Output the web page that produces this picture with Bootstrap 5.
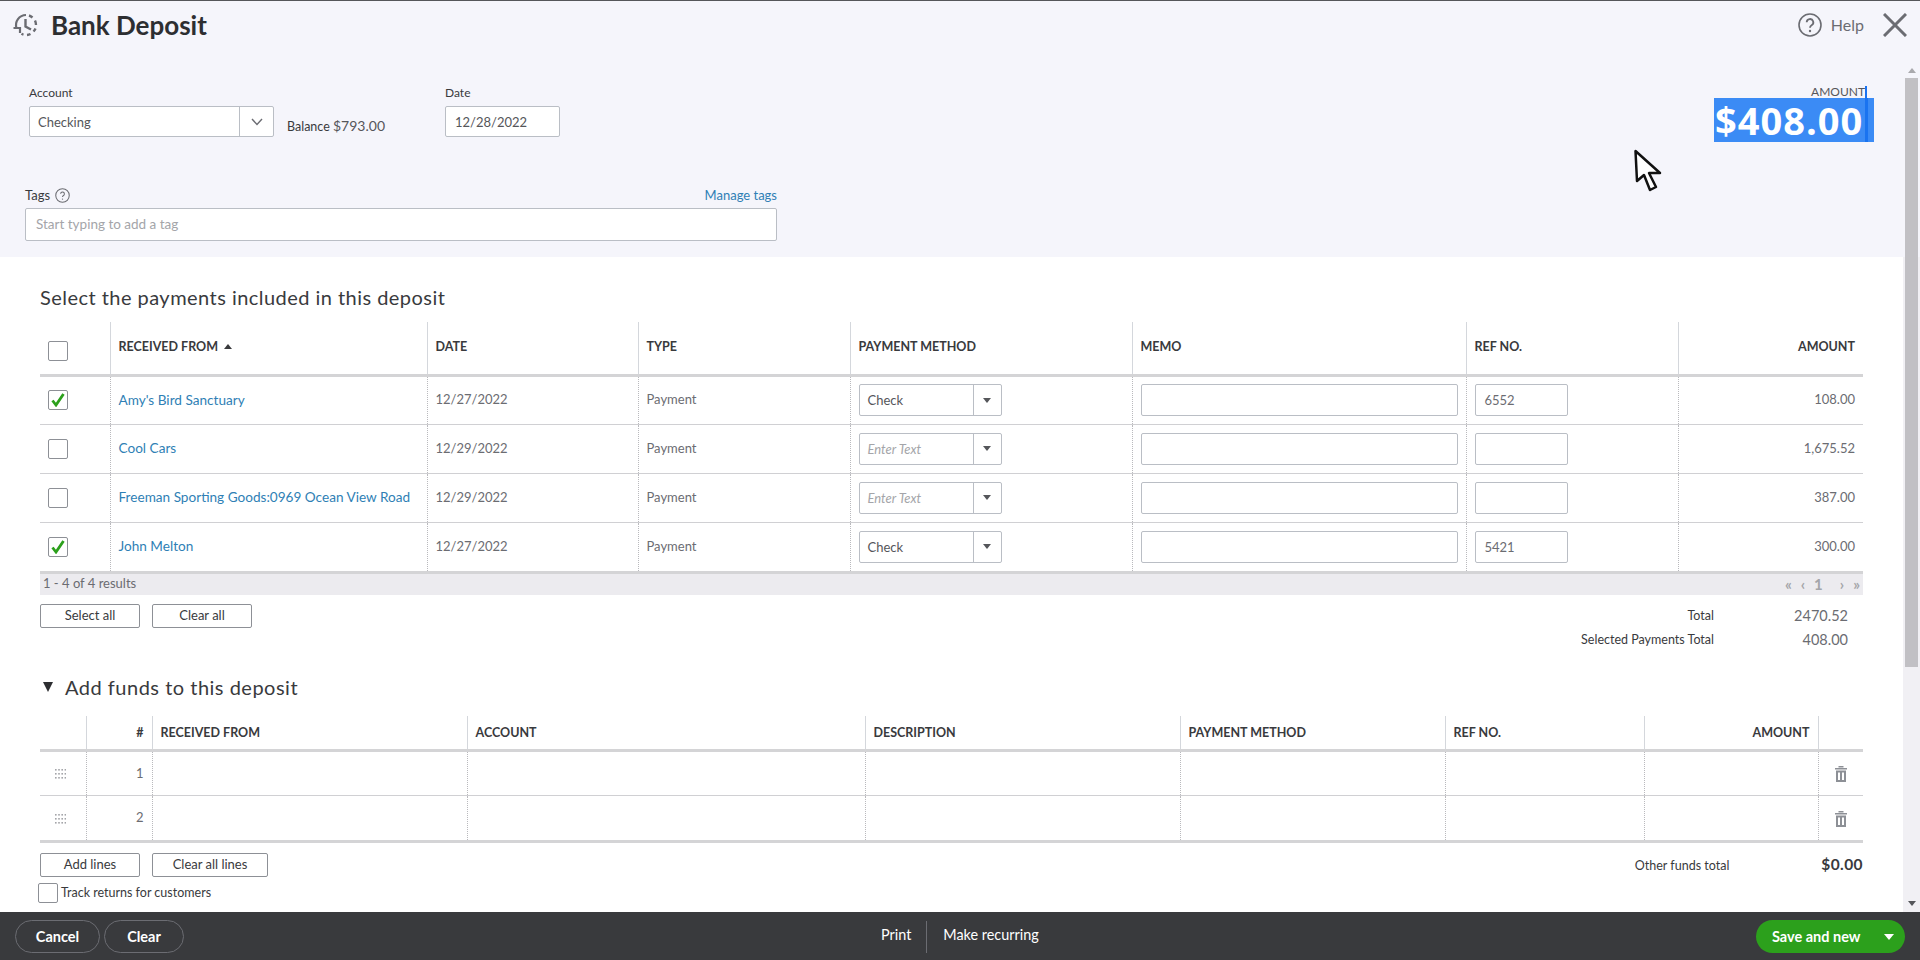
<!DOCTYPE html>
<html lang="en">
<head>
  <meta charset="UTF-8">
  <title>Bank Deposit</title>
  <link rel="stylesheet" href="https://cdn.jsdelivr.net/npm/bootstrap@5.3.0/dist/css/bootstrap.min.css">
  <style>
    html, body { height: 100%; overflow: hidden; }
    body {
      font-family: Lato, "Liberation Sans", sans-serif;
      font-size: 13px;
      color: #393a3d;
      background: #fff;
      display: flex;
      flex-direction: column;
      border-top: 1px solid #55565a;
    }
    a { text-decoration: none; color: #2f7fb5; }

    /* top bar */
    .top-bar { height: 59px; background: #f5f5fb; padding: 12px 13px 0 13px; flex: none; }
    .page-title { font-size: 26px; font-weight: 700; margin: -3px 0 0 12px; color: #2d2e31; line-height: 30px; }
    .help-text { font-size: 16px; color: #6b6c72; margin: 0 19px 0 9px; }

    /* scroll area */
    .scroll-row { flex: 1; min-height: 0; display: flex; }
    .scroll-body { flex: 1; min-width: 0; overflow: hidden; }
    .scroll-track { width: 17px; background: #f1f0f4; display: flex; flex-direction: column; align-items: center; flex: none; }
    .track-head { background: #f5f5fb; height: 197px; margin-bottom: -197px; width: 100%; }
    .sb-up { width: 0; height: 0; border: 4px solid transparent; border-top: 0; border-bottom: 5px solid #a9a9ad; margin-top: 8px; position: relative; }
    .sb-thumb { width: 13px; height: 589px; background: #c1c0c4; margin-top: 5px; position: relative; }
    .sb-down { width: 0; height: 0; border: 4px solid transparent; border-bottom: 0; border-top: 5px solid #55565a; margin-top: auto; margin-bottom: 6px; }

    /* header form */
    .form-panel { background: #f5f5fb; height: 197px; padding: 26px 0 0 25px; }
    .top-fields { height: 51px; }
    .form-label-sm { font-size: 12px; line-height: 14px; margin-bottom: 6px; color: #393a3d; }
    .account-col { margin-left: 4px; width: 245px; }
    .fake-select { height: 31px; background: #fff; border: 1px solid #babec5; border-radius: 2px; display: flex; align-items: stretch; }
    .fake-select .val { flex: 1; padding: 0 8px; font-size: 13px; line-height: 30px; color: #55565a; }
    .fake-select .arr { width: 34px; border-left: 1px solid #babec5; display: flex; align-items: center; justify-content: center; }
    .balance { margin: 29px 0 0 13px; width: 158px; font-size: 12.5px; }
    .balance span { font-size: 14px; color: #55565a; }
    .date-box { width: 115px; height: 31px; background: #fff; border: 1px solid #babec5; border-radius: 2px; padding: 0 9px; line-height: 30px; color: #55565a; }
    .amount-box { margin-left: auto; margin-right: 29px; width: 160px; text-align: right; }
    .amount-label { font-size: 12px; line-height: 12px; color: #55565a; padding-right: 9px; }
    .amount-label i { display: inline-block; width: 2px; height: 12px; background: #1a73f0; vertical-align: top; margin-right: -2px; }
    .amount-value { display: block; height: 44px; background: linear-gradient(to right, #3b8bf5 0, #3b8bf5 151px, #1a73f0 151px, #1a73f0 154px, #3b8bf5 154px); color: #fff; font-size: 38px; font-weight: 700; line-height: 44px; text-align: left; padding-left: 1px; font-family: "Open Sans", sans-serif; letter-spacing: 1px; white-space: nowrap; }
    .tags-block { width: 752px; margin-top: 49px; }
    .tags-head { height: 22px; font-size: 13px; }
    .tags-head a { font-size: 13px; line-height: 18px; }
    .tag-input { height: 33px; background: #fff; border: 1px solid #babec5; border-radius: 2px; padding: 0 10px; line-height: 31px; color: #a4a5a9; font-size: 13.5px; }
    .qmark { width: 15px; height: 15px; margin-left: 5px; }

    /* tables */
    .section-title { font-size: 20px; letter-spacing: .46px; color: #393a3d; margin: 0 0 13px; line-height: 24px; font-weight: 400; }
    .pay-section { padding: 28px 40px 0 40px; }
    .dep-table { width: 1823px; table-layout: fixed; margin: 0; border-collapse: collapse; font-size: 13px; color: #6b6c72; }
    .dep-table th { height: 53px; font-size: 12.5px; font-weight: 700; color: #393a3d; padding: 0 8px 1px; border-left: 1px solid #d4d7dc; border-bottom: 3px solid #d4d4d6; vertical-align: middle; white-space: nowrap; }
    .dep-table td { height: 49px; padding: 0 8px; border-left: 1px dotted #b9b9bd; border-bottom: 1px solid #d0d0d3; vertical-align: middle; white-space: nowrap; }
    .dep-table td a { font-size: 13.6px; }
    .dep-table th:first-child, .dep-table td:first-child { border-left: 0; }
    .dep-table tbody tr:last-child td { border-bottom: 3px solid #d4d4d6; height: 50px; }
    .w-check { width: 70px; } .w-from { width: 317px; } .w-date { width: 211px; } .w-type { width: 212px; }
    .w-method { width: 282px; } .w-memo { width: 334px; } .w-ref { width: 212px; } .w-amt { width: 185px; }
    .sort-up { display: inline-block; border: 4px solid transparent; border-top: 0; border-bottom: 5px solid #393a3d; margin-left: 3px; vertical-align: 2px; }
    .box { width: 20px; height: 20px; border: 1px solid #8d9096; border-radius: 2px; background: #fff; display: flex; align-items: center; justify-content: center; }
    .box-head { margin-top: 8px; }
    .cell-select { width: 143px; height: 32px; border: 1px solid #babec5; border-radius: 2px; display: flex; background: #fff; }
    .cell-select .val { flex: 1; padding: 0 8px; line-height: 30px; color: #55565a; font-size: 13px; }
    .cell-select .val.empty { font-style: italic; color: #a4a5a9; font-size: 13px; }
    .cell-select .arr { width: 28px; border-left: 1px solid #babec5; display: flex; align-items: center; justify-content: center; }
    .caret-dn { width: 0; height: 0; border: 4px solid transparent; border-bottom: 0; border-top: 5px solid #55565a; }
    .cell-input { height: 32px; border: 1px solid #babec5; border-radius: 2px; background: #fff; padding: 0 9px; line-height: 30px; color: #6b6c72; }
    .memo-input { width: 317px; }
    .ref-input { width: 93px; }
    .pager-bar { height: 21px; background: #ecebef; display: flex; justify-content: space-between; align-items: center; padding: 0 3px; font-size: 13px; color: #6b6c72; }
    .pager-nav { color: #a4a5a9; font-weight: 700; font-size: 15px; line-height: 18px; display: flex; gap: 9px; }
    .plain-btn { height: 24px; border: 1px solid #8d9096; border-radius: 2px; background: #fff; font-size: 13px; color: #393a3d; display: inline-flex; align-items: center; justify-content: center; padding: 0; }
    .btn-sel { width: 100px; }
    .btn-add { width: 100px; }
    .btn-clearlines { width: 116px; margin-left: 12px; }
    .btn-row { margin-top: 9px; gap: 12px; }
    .totals { font-size: 12.5px; text-align: right; }
    .totals-grid { display: grid; grid-template-columns: auto 134px; row-gap: 6px; padding-right: 15px; margin-top: 12px; }
    .totals-grid b { font-weight: 400; color: #393a3d; line-height: 18px; }
    .totals-grid span { color: #6b6c72; font-size: 14.500px; line-height: 18px; }
    .funds-section { padding: 0 40px; margin-top: 25px; }
    .tri-down { width: 0; height: 0; border: 5.5px solid transparent; border-bottom: 0; border-top: 10px solid #2d2e31; margin: 0 12px 0 3px; }
    .funds-title { font-size: 20px; color: #393a3d; margin: 0; line-height: 26px; font-weight: 400; letter-spacing: .5px; }
    .funds-table { margin-top: 16px; }
    .funds-table th { height: 35px; padding-top: 2px; padding-bottom: 0; }
    .funds-table td { height: 45px; }
    .funds-table tbody tr:last-child td { height: 46px; }
    .f-drag { width: 46px; } .f-num { width: 66px; } .f-from { width: 315px; } .f-acct { width: 398px; } .f-desc { width: 315px; }
    .f-meth { width: 265px; } .f-ref { width: 199px; } .f-amt { width: 174px; } .f-del { width: 45px; }
    .drag-cell { padding-right: 12px !important; }
    .funds-actions { margin-top: 10px; height: 24px; }
    .other-total { font-size: 12.5px; color: #393a3d; }
    .other-total b { font-size: 15.500px; font-weight: 700; margin-left: 92px; letter-spacing: .4px; }
    .track-row { font-size: 12.5px; color: #393a3d; margin-left: -2px; margin-top: 6px; }
    .track-row .box { margin-right: 3px; }

    /* bottom bar */
    .bottom-bar { height: 48px; flex: none; background: #393a3d; color: #fff; padding: 8px 15px 7px 15px; display: flex; align-items: center; }
    .pill { height: 33px; border: 1px solid #6b6c72; border-radius: 17px; color: #fff; background: transparent; font-size: 14.500px; font-weight: 700; display: inline-flex; align-items: center; justify-content: center; padding: 0; }
    .pill-cancel { width: 85px; margin-right: 4px; }
    .pill-clear { width: 80px; }
    .left-actions { width: 866px; }
    .mid-actions { height: 32px; display: flex; align-items: center; font-size: 14.400px; }
    .mid-text { margin-top: -3px; }
    .mid-sep { width: 1px; height: 32px; background: #6b6c72; margin: 0 16px 0 15px; }
    .save-btn { width: 149px; height: 33px; margin-left: auto; background: #2ca01c; color: #fff; border: 0; border-radius: 17px; font-size: 14.500px; font-weight: 700; display: flex; align-items: center; padding: 0 11px 0 16px; justify-content: space-between; }
    .save-caret { width: 0; height: 0; border: 5px solid transparent; border-bottom: 0; border-top: 6px solid #fff; }
    .mouse-cursor { position: absolute; left: 1634px; top: 149px; width: 28px; height: 44px; }
  </style>
</head>
<body>

<div class="top-bar d-flex align-items-start">
  <svg width="26" height="24" viewBox="0 0 26 24" fill="none" stroke="#6b6c72" stroke-width="2.200">
    <path d="M3.500 15A10 10 0 0 1 13 2" />
    <path d="M16 2.500A10 10 0 0 1 19.500 4.500" stroke-width="2.400" />
    <path d="M22 7.500A10 10 0 0 1 23 12" stroke-width="2.400" />
    <path d="M22.500 15.500A10 10 0 0 1 20.500 18.500" stroke-width="2.400" />
    <path d="M17.500 21A10 10 0 0 1 14 22" stroke-width="2.400" />
    <path d="M10.500 21.700A10 10 0 0 1 8.500 20.800" stroke-width="2.400" />
    <path d="M12.500 6v7.500l5.500 3" stroke-width="2.400" />
    <path d="M0.500 15h6.500v5" stroke-width="2.200" />
  </svg>
  <h1 class="page-title flex-grow-1">Bank Deposit</h1>
  <div class="d-flex align-items-center">
    <svg width="24" height="24" viewBox="0 0 24 24" fill="none" stroke="#6b6c72" stroke-width="1.600">
      <circle cx="12" cy="12" r="11" />
      <path d="M8.700 9.300A3.300 3.300 0 1 1 13.600 12.200C12.500 12.900 12 13.400 12 14.800" stroke-width="1.800" />
      <circle cx="12" cy="18" r="1.200" fill="#6b6c72" stroke="none" />
    </svg>
    <span class="help-text">Help</span>
    <svg width="24" height="24" viewBox="0 0 24 24" fill="none" stroke="#6b6c72" stroke-width="3">
      <path d="M1 1l22 22M23 1L1 23" />
    </svg>
  </div>
</div>

<div class="scroll-row">
  <div class="scroll-body">
    <div class="form-panel">
      <div class="d-flex top-fields">
        <div class="account-col">
          <div class="form-label-sm">Account</div>
          <div class="fake-select">
            <div class="val">Checking</div>
            <div class="arr">
              <svg width="12" height="8" viewBox="0 0 12 8" fill="none" stroke="#6b6c72" stroke-width="1.400"><path d="M1 1l5 5.500L11 1" /></svg>
            </div>
          </div>
        </div>
        <div class="balance">Balance <span>$793.00</span></div>
        <div>
          <div class="form-label-sm">Date</div>
          <div class="date-box">12/28/2022</div>
        </div>
        <div class="amount-box">
          <div class="amount-label">AMOUNT<i></i></div>
          <div class="amount-value">$408.00</div>
        </div>
      </div>
      <div class="tags-block">
        <div class="tags-head d-flex justify-content-between align-items-start">
          <div class="d-flex align-items-center">Tags
            <svg class="qmark" viewBox="0 0 16 16" fill="none" stroke="#6b6c72" stroke-width="1.100">
              <circle cx="8" cy="8" r="7.200" />
              <path d="M6 6.200A2 2 0 1 1 9 8C8.300 8.500 8 8.800 8 9.600" />
              <circle cx="8" cy="11.800" r=".7" fill="#6b6c72" stroke="none" />
            </svg>
          </div>
          <a href="#">Manage tags</a>
        </div>
        <div class="tag-input">Start typing to add a tag</div>
      </div>
    </div>

    <div class="pay-section">
      <h2 class="section-title">Select the payments included in this deposit</h2>
      <table class="table dep-table" id="payments-table">
        <colgroup>
          <col class="w-check"><col class="w-from"><col class="w-date"><col class="w-type">
          <col class="w-method"><col class="w-memo"><col class="w-ref"><col class="w-amt">
        </colgroup>
        <thead>
          <tr>
            <th><div class="box box-head"></div></th>
            <th>RECEIVED FROM <span class="sort-up"></span></th>
            <th>DATE</th>
            <th>TYPE</th>
            <th>PAYMENT METHOD</th>
            <th>MEMO</th>
            <th>REF NO.</th>
            <th class="text-end">AMOUNT</th>
          </tr>
        </thead>
        <tbody id="payments-body"></tbody>
      </table>
      <div class="pager-bar">
        <span>1 - 4 of 4 results</span>
        <span class="pager-nav"><span>«</span><span>‹</span><span>1</span><span class="ms-2">›</span><span>»</span></span>
      </div>
      <div class="d-flex justify-content-between align-items-start">
        <div class="d-flex btn-row">
          <button class="plain-btn btn-sel">Select all</button>
          <button class="plain-btn btn-sel">Clear all</button>
        </div>
        <div class="totals-grid totals">
          <b>Total</b><span>2470.52</span>
          <b>Selected Payments Total</b><span>408.00</span>
        </div>
      </div>
    </div>

    <div class="funds-section">
      <div class="d-flex align-items-center">
        <div class="tri-down"></div>
        <h2 class="funds-title">Add funds to this deposit</h2>
      </div>
      <table class="table dep-table funds-table">
        <colgroup>
          <col class="f-drag"><col class="f-num"><col class="f-from"><col class="f-acct"><col class="f-desc">
          <col class="f-meth"><col class="f-ref"><col class="f-amt"><col class="f-del">
        </colgroup>
        <thead>
          <tr>
            <th></th>
            <th class="text-end">#</th>
            <th>RECEIVED FROM</th>
            <th>ACCOUNT</th>
            <th>DESCRIPTION</th>
            <th>PAYMENT METHOD</th>
            <th>REF NO.</th>
            <th class="text-end">AMOUNT</th>
            <th></th>
          </tr>
        </thead>
        <tbody id="funds-body"></tbody>
      </table>
      <div class="d-flex justify-content-between align-items-center funds-actions">
        <div class="d-flex">
          <button class="plain-btn btn-add">Add lines</button>
          <button class="plain-btn btn-clearlines">Clear all lines</button>
        </div>
        <div class="other-total">Other funds total<b>$0.00</b></div>
      </div>
      <div class="track-row d-flex align-items-center">
        <div class="box"></div>Track returns for customers
      </div>
    </div>
  </div>
  <div class="scroll-track">
    <div class="track-head"></div>
    <div class="sb-up"></div>
    <div class="sb-thumb"></div>
    <div class="sb-down"></div>
  </div>
</div>

<div class="bottom-bar">
  <div class="left-actions">
    <button class="pill pill-cancel">Cancel</button><button class="pill pill-clear">Clear</button>
  </div>
  <div class="mid-actions">
    <span class="mid-text">Print</span><span class="mid-sep"></span><span class="mid-text">Make recurring</span>
  </div>
  <button class="save-btn">Save and new<span class="save-caret"></span></button>
</div>

<svg class="mouse-cursor" viewBox="0 0 28 44" fill="#fff" stroke="#111" stroke-width="2.500" stroke-linejoin="round">
  <path d="M1.500 2L3 32l7-6 6 15 6-3-7-14h11z" />
</svg>

<script>
  const payments = [
    { name: "Amy's Bird Sanctuary", date: '12/27/2022', checked: true, method: 'Check', ref: '6552', amount: '108.00' },
    { name: 'Cool Cars', date: '12/29/2022', checked: false, method: '', ref: '', amount: '1,675.52' },
    { name: 'Freeman Sporting Goods:0969 Ocean View Road', date: '12/29/2022', checked: false, method: '', ref: '', amount: '387.00' },
    { name: 'John Melton', date: '12/27/2022', checked: true, method: 'Check', ref: '5421', amount: '300.00' }
  ];

  const tick = '<svg width="14" height="14" viewBox="0 0 14 14" fill="none" stroke="#2ca01c" stroke-width="2.800"><path d="M1.500 7.500l3.500 4.500L12.500 1" /></svg>';

  document.getElementById('payments-body').innerHTML = payments.map(p => `
    <tr>
      <td><div class="box">${p.checked ? tick : ''}</div></td>
      <td><a href="#">${p.name}</a></td>
      <td>${p.date}</td>
      <td>Payment</td>
      <td>
        <div class="cell-select">
          <div class="val ${p.method ? '' : 'empty'}">${p.method || 'Enter Text'}</div>
          <div class="arr"><span class="caret-dn"></span></div>
        </div>
      </td>
      <td><div class="cell-input memo-input"></div></td>
      <td><div class="cell-input ref-input">${p.ref}</div></td>
      <td class="text-end">${p.amount}</td>
    </tr>`).join('');

  // grip is 4 columns by 3 rows of dots
  let gripDots = '';
  for (let row = 0; row < 3; row++) {
    for (let col = 0; col < 4; col++) {
      gripDots += `<rect x="${col * 3.2}" y="${row * 4}" width="1.600" height="1.600"/>`;
    }
  }
  const dots = `<svg width="11" height="10" viewBox="0 0 11 10" fill="#a4a5a9">${gripDots}</svg>`;
  const trash = '<svg width="12" height="16" viewBox="0 0 12 16" fill="#8d9096"><rect x="3.500" y="0" width="5" height="1.500"/><rect x="0" y="2" width="12" height="1.500"/><path d="M1 4.500h10V16H1zM3 6.500v7.500h2V6.500zM7 6.500v7.500h2V6.500z" fill-rule="evenodd"/></svg>';

  document.getElementById('funds-body').innerHTML = [1, 2].map(n => `
    <tr>
      <td class="text-center drag-cell">${dots}</td>
      <td class="text-end">${n}</td>
      <td></td><td></td><td></td><td></td><td></td><td></td>
      <td class="text-center">${trash}</td>
    </tr>`).join('');
</script>

<script src="https://cdn.jsdelivr.net/npm/bootstrap@5.3.0/dist/js/bootstrap.bundle.min.js"></script>
</body>
</html>
